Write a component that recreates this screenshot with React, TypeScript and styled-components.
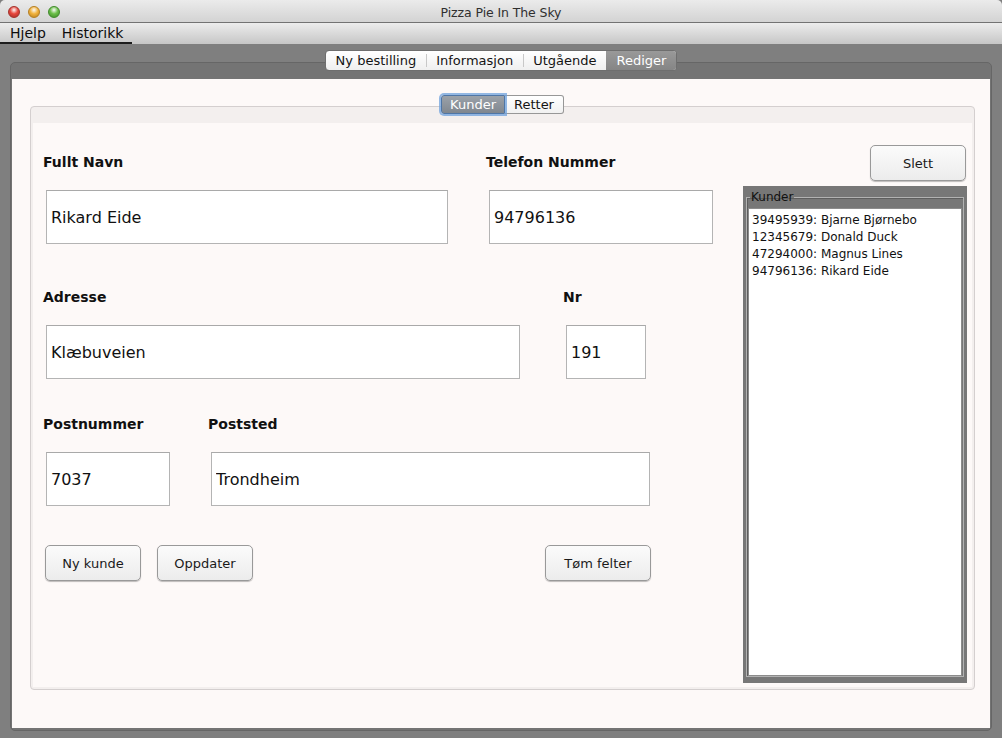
import styled, { createGlobalStyle } from 'styled-components';

const GlobalStyle = createGlobalStyle`
  html, body { margin: 0; padding: 0; }
  body {
    font-family: 'DejaVu Sans', 'Liberation Sans', sans-serif;
    background: #7f7f7f;
  }
  * { box-sizing: border-box; }
`;

const Window = styled.div`
  width: 1002px;
  height: 738px;
  display: flex;
  flex-direction: column;
  overflow: hidden;
  background: #7f7f7f;
`;

const TitleBar = styled.div`
  flex: none;
  height: 23px;
  padding-top: 2px;
  display: grid;
  grid-template-columns: 1fr auto 1fr;
  align-items: center;
  background: linear-gradient(#ebebeb, #d3d3d3);
  border-bottom: 1px solid #727272;
  border-radius: 5px 5px 0 0;
`;

const Lights = styled.div`
  display: flex;
  gap: 8px;
  padding-left: 8px;
`;

const Light = styled.span<{ $c: string; $d: string }>`
  width: 12px;
  height: 12px;
  border-radius: 50%;
  border: 1px solid ${p => p.$d};
  background: radial-gradient(circle at 50% 30%, #ffffffcc 0, ${p => p.$c} 45%, ${p => p.$d} 100%);
`;

const Title = styled.div`
  font-size: 12.5px;
  color: #2f2f2f;
  letter-spacing: -0.1px;
`;

const MenuBar = styled.div`
  flex: none;
  height: 21px;
  display: flex;
  background: linear-gradient(#ececec, #c6c6c6);
`;

const Menus = styled.div`
  width: 132px;
  display: flex;
  align-items: center;
  padding-left: 2px;
  border-bottom: 2px solid #1c1c1c;
`;

const MenuItem = styled.span`
  padding: 0 8px;
  font-size: 14px;
  color: #0d0d0d;
`;

const Main = styled.div`
  flex: 1;
  display: flex;
  flex-direction: column;
  padding: 6px 10px 7px;
`;

const TabStrip = styled.div`
  align-self: center;
  position: relative;
  z-index: 1;
  height: 21px;
  display: flex;
  border: 1px solid #6e6e6e;
  border-radius: 4px;
  overflow: hidden;
  background: linear-gradient(#ffffff, #efefef);
`;

const Segment = styled.div<{ $active?: boolean; $sep?: boolean }>`
  position: relative;
  padding: 0 10px;
  line-height: 19px;
  font-size: 13px;
  color: ${p => (p.$active ? '#ffffff' : '#141414')};
  background: ${p => (p.$active ? 'linear-gradient(#999999, #858585)' : 'transparent')};

  &::before {
    content: '';
    display: ${p => (p.$sep ? 'block' : 'none')};
    position: absolute;
    left: 0;
    top: 3px;
    bottom: 3px;
    width: 1px;
    background: #c8c8c8;
  }
`;

const Pane = styled.div`
  flex: 1;
  margin-top: -9px;
  display: flex;
  flex-direction: column;
  padding: 16px 1px 2px;
  border: 1px solid #666666;
  border-radius: 5px;
  background: #747474;
`;

const Content = styled.div`
  flex: 1;
  display: flex;
  flex-direction: column;
  padding: 16px 15px 38px 18px;
  background: #fdf9f8;
`;

const InnerTabs = styled.div`
  align-self: center;
  position: relative;
  z-index: 1;
  height: 19px;
  display: flex;
`;

const InnerTab = styled.div<{ $active?: boolean }>`
  padding: 0 ${p => (p.$active ? 8 : 9)}px;
  line-height: 17px;
  font-size: 13px;
  color: ${p => (p.$active ? '#ffffff' : '#141414')};
  background: ${p => (p.$active ? 'linear-gradient(#9ba2aa, #80878f)' : 'linear-gradient(#ffffff, #f1f1f1)')};
  border: 1px solid ${p => (p.$active ? '#4f76a6' : '#979797')};
  border-left-width: ${p => (p.$active ? '1px' : '0')};
  border-radius: ${p => (p.$active ? '3px 0 0 3px' : '0 3px 3px 0')};
  box-shadow: ${p => (p.$active ? '0 0 0 2px rgba(110, 160, 220, 0.75)' : 'none')};
  z-index: ${p => (p.$active ? 1 : 0)};
`;

const InnerPane = styled.div`
  flex: 1;
  margin-top: -8px;
  display: flex;
  flex-direction: column;
  padding: 16px 2px 2px;
  border: 1px solid #d4cfcf;
  border-radius: 4px;
  background: #f3efee;
`;

const Body = styled.div`
  flex: 1;
  display: flex;
  padding: 0 5px 4px 10px;
  background: #fdf9f8;
`;

const FormCol = styled.div`
  flex: 1;
  padding-top: 31px;
  display: flex;
  flex-direction: column;
`;

const Row = styled.div<{ $gap?: number; $mt?: number }>`
  display: flex;
  align-items: flex-start;
  gap: ${p => p.$gap ?? 0}px;
  margin-top: ${p => p.$mt ?? 0}px;
`;

const Field = styled.div`
  display: flex;
  flex-direction: column;
`;

const Label = styled.div`
  font-size: 14px;
  font-weight: bold;
  line-height: 17px;
  color: #111111;
  margin-bottom: 19px;
`;

const TextField = styled.input<{ $w: number }>`
  width: ${p => p.$w}px;
  height: 54px;
  margin: 0 0 0 3px;
  padding: 0 4px;
  border: 1px solid #b4b4b4;
  border-top-color: #a9a9a9;
  background: #ffffff;
  font-family: 'DejaVu Sans', sans-serif;
  font-size: 16px;
  color: #111111;
  outline: none;
`;

const Button = styled.button<{ $w: number; $ml?: number }>`
  width: ${p => p.$w}px;
  height: 36px;
  margin-left: ${p => p.$ml ?? 0}px;
  padding: 0;
  border: 1px solid #999999;
  border-radius: 5px;
  background: linear-gradient(#fbfbfb, #ececec);
  box-shadow: 0 1px 1px rgba(0, 0, 0, 0.25);
  font-family: 'DejaVu Sans', sans-serif;
  font-size: 13px;
  color: #1a1a1a;
`;

const SideCol = styled.div`
  width: 224px;
  flex: none;
  padding-top: 22px;
  display: flex;
  flex-direction: column;
  gap: 5px;
`;

const SlettButton = styled(Button)`
  align-self: flex-end;
  margin-right: 1px;
`;

const ListBox = styled.div`
  flex: 1;
  display: flex;
  flex-direction: column;
  padding: 4px 3px 6px 3px;
  background: #777777;
`;

const Group = styled.fieldset`
  flex: 1;
  min-width: 0;
  margin: 0;
  padding: 4px 1px 0 1px;
  display: flex;
  flex-direction: column;
  border: 1px solid #b2b2b2;
  box-shadow: inset 1px 1px 0 #5e5e5e;
`;

const Legend = styled.legend`
  margin-left: 2px;
  padding: 0 1px;
  font-size: 12px;
  line-height: 14px;
  color: #111111;
`;

const List = styled.div`
  flex: 1;
  padding: 3px 3px;
  background: #ffffff;
  border: 1px solid #8c8c8c;
`;

const ListItem = styled.div`
  font-size: 12px;
  line-height: 17px;
  color: #111111;
  white-space: nowrap;
`;

const customers = [
  '39495939: Bjarne Bjørnebo',
  '12345679: Donald Duck',
  '47294000: Magnus Lines',
  '94796136: Rikard Eide',
];

export default function App() {
  return (
    <Window>
      <GlobalStyle />
      <TitleBar>
        <Lights>
          <Light $c="#e8473d" $d="#a3302a" />
          <Light $c="#f2b33d" $d="#b67e20" />
          <Light $c="#6bbf48" $d="#3f8a2a" />
        </Lights>
        <Title>Pizza Pie In The Sky</Title>
        <span />
      </TitleBar>

      <MenuBar>
        <Menus>
          <MenuItem>Hjelp</MenuItem>
          <MenuItem>Historikk</MenuItem>
        </Menus>
      </MenuBar>

      <Main>
        <TabStrip>
          <Segment>Ny bestilling</Segment>
          <Segment $sep>Informasjon</Segment>
          <Segment $sep>Utgående</Segment>
          <Segment $active>Rediger</Segment>
        </TabStrip>

        <Pane>
          <Content>
            <InnerTabs>
              <InnerTab $active>Kunder</InnerTab>
              <InnerTab>Retter</InnerTab>
            </InnerTabs>

            <InnerPane>
              <Body>
                <FormCol>
                  <Row $gap={38}>
                    <Field>
                      <Label>Fullt Navn</Label>
                      <TextField $w={402} defaultValue="Rikard Eide" />
                    </Field>
                    <Field>
                      <Label>Telefon Nummer</Label>
                      <TextField $w={224} defaultValue="94796136" />
                    </Field>
                  </Row>

                  <Row $gap={43} $mt={45}>
                    <Field>
                      <Label>Adresse</Label>
                      <TextField $w={474} defaultValue="Klæbuveien" />
                    </Field>
                    <Field>
                      <Label>Nr</Label>
                      <TextField $w={80} defaultValue="191" />
                    </Field>
                  </Row>

                  <Row $gap={38} $mt={37}>
                    <Field>
                      <Label>Postnummer</Label>
                      <TextField $w={124} defaultValue="7037" />
                    </Field>
                    <Field>
                      <Label>Poststed</Label>
                      <TextField $w={439} defaultValue="Trondheim" />
                    </Field>
                  </Row>

                  <Row $mt={39}>
                    <Button $w={96} $ml={2}>Ny kunde</Button>
                    <Button $w={96} $ml={16}>Oppdater</Button>
                    <Button $w={106} $ml={292}>Tøm felter</Button>
                  </Row>
                </FormCol>

                <SideCol>
                  <SlettButton $w={96}>Slett</SlettButton>
                  <ListBox>
                    <Group>
                      <Legend>Kunder</Legend>
                      <List>
                        {customers.map(c => (
                          <ListItem key={c}>{c}</ListItem>
                        ))}
                      </List>
                    </Group>
                  </ListBox>
                </SideCol>
              </Body>
            </InnerPane>
          </Content>
        </Pane>
      </Main>
    </Window>
  );
}
